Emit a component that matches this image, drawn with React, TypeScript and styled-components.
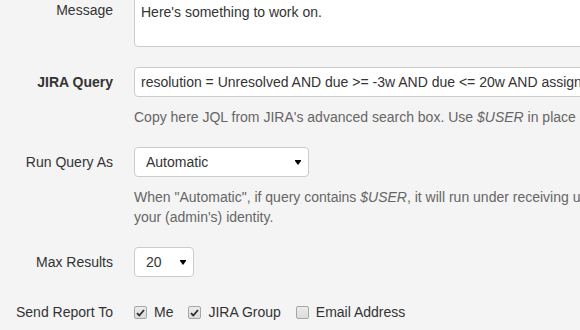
import React from "react";
import styled, { createGlobalStyle } from "styled-components";

const GlobalStyle = createGlobalStyle`
  html, body {
    margin: 0;
    padding: 0;
    background: #f4f4f4;
    overflow: hidden;
  }
  body {
    font-family: "Liberation Sans", Arial, Helvetica, sans-serif;
    font-size: 14px;
    line-height: 20px;
    color: #333;
  }
`;

const Form = styled.form`
  display: flex;
  flex-direction: column;
  gap: 20px;
  margin-top: -5px;
  width: 820px;
`;

const Row = styled.div`
  display: grid;
  grid-template-columns: 113px 670px;
  column-gap: 21px;
  align-items: start;
`;

const Label = styled.label<{ $bold?: boolean }>`
  text-align: right;
  padding-top: 5px;
  line-height: 20px;
  font-weight: ${(p) => (p.$bold ? 700 : 400)};
  color: #333;
  white-space: nowrap;
`;

const Field = styled.div`
  display: flex;
  flex-direction: column;
  align-items: flex-start;
`;

const TextArea = styled.textarea`
  box-sizing: border-box;
  width: 100%;
  height: 52px;
  padding: 6px;
  margin: 0;
  border: 1px solid #ccc;
  border-radius: 4px;
  background: #fff;
  font: inherit;
  line-height: 20px;
  color: #333;
  resize: none;
  outline: none;
`;

const Input = styled.input`
  box-sizing: border-box;
  width: 100%;
  height: 30px;
  padding: 4px 6px;
  margin: 0;
  border: 1px solid #ccc;
  border-radius: 4px;
  background: #fff;
  font: inherit;
  line-height: 20px;
  color: #333;
  outline: none;
`;

const Select = styled.div<{ $width: number }>`
  box-sizing: border-box;
  width: ${(p) => p.$width}px;
  height: 30px;
  padding: 4px 7px 4px 11px;
  display: flex;
  align-items: center;
  justify-content: space-between;
  border: 1px solid #ccc;
  border-radius: 4px;
  background: #fff;
  color: #333;
`;

const Help = styled.p`
  margin: 10px 0 0;
  line-height: 20px;
  color: #666;
`;

const Checks = styled.div`
  display: flex;
  align-items: center;
  gap: 15px;
  padding-top: 5px;
  height: 20px;
`;

const CheckItem = styled.label`
  display: flex;
  align-items: center;
  gap: 7px;
  color: #333;
  white-space: nowrap;
`;

const Box = styled.span`
  box-sizing: border-box;
  width: 13px;
  height: 13px;
  margin-top: 1px;
  border: 1px solid #a6a6a6;
  border-radius: 2px;
  background: linear-gradient(#ececec, #dcdcdc);
  display: flex;
  align-items: center;
  justify-content: center;
`;

const Arrow = () => (
  <svg width="6" height="5" viewBox="0 0 6 5" aria-hidden="true">
    <path d="M0 0 H6 V1 L3 5 L0 1 Z" fill="#000" />
  </svg>
);

const Check = () => (
  <svg width="9" height="8" viewBox="0 0 9 8" aria-hidden="true">
    <path
      d="M1 4.2 L3.3 6.5 L8 1"
      fill="none"
      stroke="#2b2b2b"
      strokeWidth="1.8"
    />
  </svg>
);

const CheckBox = ({ checked, children }: { checked: boolean; children: React.ReactNode }) => (
  <CheckItem>
    <Box>{checked && <Check />}</Box>
    {children}
  </CheckItem>
);

export default function App() {
  return (
    <>
      <GlobalStyle />
      <Form>
        <Row>
          <Label>Message</Label>
          <Field>
            <TextArea readOnly defaultValue="Here's something to work on." />
          </Field>
        </Row>
        <Row>
          <Label $bold>JIRA Query</Label>
          <Field>
            <Input
              readOnly
              defaultValue="resolution = Unresolved AND due >= -3w AND due <= 20w AND assignee = $USER ORDER BY due ASC"
            />
            <Help>
              Copy here JQL from JIRA's advanced search box. Use <em>$USER</em> in place of the recipient.
            </Help>
          </Field>
        </Row>
        <Row>
          <Label>Run Query As</Label>
          <Field>
            <Select $width={175}>
              <span>Automatic</span>
              <Arrow />
            </Select>
            <Help>
              When "Automatic", if query contains <em>$USER</em>, it will run under receiving user's identity,
              <br />
              your (admin's) identity.
            </Help>
          </Field>
        </Row>
        <Row>
          <Label>Max Results</Label>
          <Field>
            <Select $width={60}>
              <span>20</span>
              <Arrow />
            </Select>
          </Field>
        </Row>
        <Row>
          <Label>Send Report To</Label>
          <Checks>
            <CheckBox checked>Me</CheckBox>
            <CheckBox checked>JIRA Group</CheckBox>
            <CheckBox checked={false}>Email Address</CheckBox>
          </Checks>
        </Row>
      </Form>
    </>
  );
}
